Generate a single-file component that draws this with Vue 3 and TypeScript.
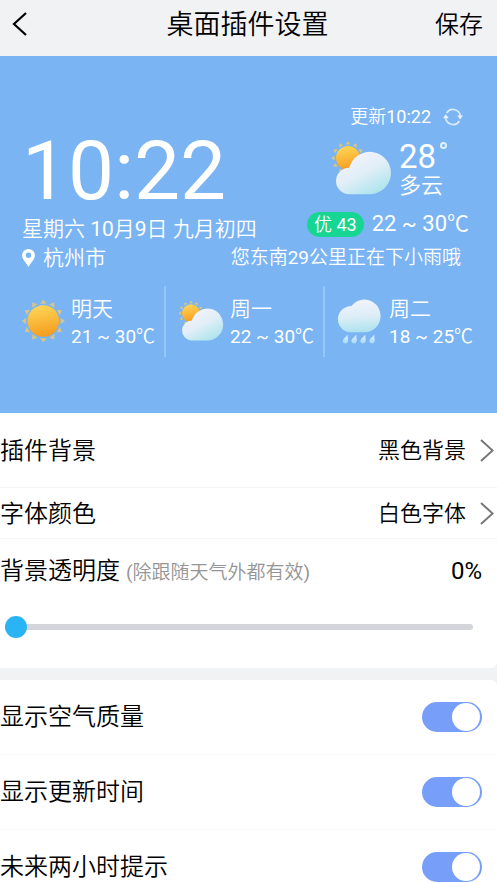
<script setup lang="ts">
import { ref } from 'vue'

type Sky = 'sunny' | 'cloudy' | 'rain'

interface Forecast {
  day: string
  range: string
  sky: Sky
}

interface Option {
  id: string
  label: string
  value: string
  choices: string[]
}

interface Toggle {
  id: string
  label: string
  on: boolean
}

const forecasts: Forecast[] = [
  { day: '明天', range: '21 ~ 30℃', sky: 'sunny' },
  { day: '周一', range: '22 ~ 30℃', sky: 'cloudy' },
  { day: '周二', range: '18 ~ 25℃', sky: 'rain' },
]

const options = ref<Option[]>([
  { id: 'background', label: '插件背景', value: '黑色背景', choices: ['黑色背景'] },
  { id: 'font-color', label: '字体颜色', value: '白色字体', choices: ['白色字体'] },
])

const toggles = ref<Toggle[]>([
  { id: 'air', label: '显示空气质量', on: true },
  { id: 'updated', label: '显示更新时间', on: true },
  { id: 'two-hours', label: '未来两小时提示', on: true },
])

const opacity = ref(0)

const rays = Array.from({ length: 12 }, (_, i) => i * 30)
const drops = [8, 16.6, 25.6, 34.6]
</script>

<template>
  <div class="page">
    <svg class="defs" width="0" height="0" aria-hidden="true">
      <defs>
        <linearGradient id="sun-fill" x1="0.4" y1="0" x2="0.6" y2="1">
          <stop offset="0" stop-color="#ffd656" />
          <stop offset="1" stop-color="#f59a1e" />
        </linearGradient>
        <linearGradient id="cloud-fill" gradientUnits="userSpaceOnUse" x1="22" y1="14" x2="44" y2="56">
          <stop offset="0" stop-color="#f1f3fc" />
          <stop offset="0.45" stop-color="#e2eef8" />
          <stop offset="1" stop-color="#a9e4ec" />
        </linearGradient>
        <linearGradient id="rain-fill" gradientUnits="userSpaceOnUse" x1="22" y1="1" x2="24" y2="34">
          <stop offset="0" stop-color="#f1f3fc" />
          <stop offset="0.5" stop-color="#dcedf7" />
          <stop offset="1" stop-color="#a9e2ee" />
        </linearGradient>
        <linearGradient id="drop-fill" x1="0" y1="0" x2="0" y2="1">
          <stop offset="0" stop-color="#e6f2fb" />
          <stop offset="1" stop-color="#a5d8f7" />
        </linearGradient>
        <symbol id="cloudy" viewBox="0 0 60 56">
          <g transform="translate(17 18)">
            <path
              v-for="angle in rays"
              :key="angle"
              d="M-2.3 -13.4 L0 -17 L2.3 -13.4 Z"
              fill="#dcc67c"
              :transform="`rotate(${angle})`"
            />
            <circle r="12" fill="url(#sun-fill)" />
          </g>
          <path
            d="M18.2 54.2 A13.2 13.2 0 0 1 18.2 27.8 A21.2 21.2 0 1 1 38 54.2 Z"
            fill="url(#cloud-fill)"
          />
        </symbol>
      </defs>
    </svg>

    <header class="bar">
      <button class="back" type="button" aria-label="返回">
        <svg width="16" height="26" viewBox="0 0 16 26" aria-hidden="true">
          <path d="M14 1 L2 12 L14 23" fill="none" stroke="#000" stroke-width="2.2" />
        </svg>
      </button>
      <h1 class="title">桌面插件设置</h1>
      <button class="save" type="button">保存</button>
    </header>

    <section class="widget">
      <div class="current">
        <div class="when">
          <div class="clock">10:22</div>
          <div class="date">星期六 10月9日 九月初四</div>
        </div>
        <div class="now">
          <div class="updated">
            <span>更新10:22</span>
            <svg width="20" height="20" viewBox="0 0 20 20" aria-hidden="true">
              <g fill="none" stroke="#d9eafb" stroke-width="1.7">
                <path d="M3.6 6 A7.5 7.5 0 0 1 17.4 9.6" />
                <path d="M16.4 14 A7.5 7.5 0 0 1 2.6 10.4" />
              </g>
              <path d="M14.2 8.6 L20 8.6 L17.2 12.6 Z M0 11.2 L5.8 11.2 L2.8 7.2 Z" fill="#e8f3fd" />
            </svg>
          </div>
          <div class="sky">
            <svg class="sky-icon" viewBox="0 0 60 56" aria-hidden="true"><use href="#cloudy" /></svg>
            <div class="reading">
              <div class="degrees">28<span class="ring"></span></div>
              <div class="condition">多云</div>
            </div>
          </div>
          <div class="air">
            <span class="pill">优 43</span>
            <span>22 ~ 30℃</span>
          </div>
        </div>
      </div>

      <div class="place">
        <span class="city">
          <svg width="13" height="18" viewBox="0 0 13 18" aria-hidden="true">
            <path
              d="M6.5 0 A6.4 6.4 0 0 1 12.9 6.4 C12.9 10.4 8.6 13.6 6.5 18 C4.4 13.6 0.1 10.4 0.1 6.4 A6.4 6.4 0 0 1 6.5 0 Z M6.5 3.6 A2.7 2.7 0 1 0 6.5 9 A2.7 2.7 0 1 0 6.5 3.6 Z"
              fill="#fff"
              fill-rule="evenodd"
            />
          </svg>
          杭州市
        </span>
        <span class="tip">您东南29公里正在下小雨哦</span>
      </div>

      <ul class="forecast">
        <li v-for="item in forecasts" :key="item.day" class="day">
          <svg v-if="item.sky === 'sunny'" class="day-icon" viewBox="0 0 45 45" aria-hidden="true">
            <g transform="translate(23.3 22)">
              <path
                v-for="angle in rays"
                :key="angle"
                d="M-3.2 -17.2 L0 -21.6 L3.2 -17.2 Z"
                fill="#d3c58c"
                :transform="`rotate(${angle})`"
              />
              <circle r="15.8" fill="url(#sun-fill)" />
            </g>
          </svg>
          <svg v-else-if="item.sky === 'cloudy'" class="day-icon" viewBox="1 0 60 60" aria-hidden="true">
            <use href="#cloudy" width="60" height="56" y="1" />
          </svg>
          <svg v-else class="day-icon" viewBox="0 0 45 45" aria-hidden="true">
            <g fill="url(#rain-fill)">
              <path d="M13 33.3 A13 13 0 0 1 13 7.3 A16.4 16.4 0 1 1 28 33.3 Z" />
              <circle cx="13" cy="20.3" r="13" opacity="0.6" />
            </g>
            <path
              v-for="x in drops"
              :key="x"
              :transform="`translate(${x} 35.4)`"
              d="M1.6 0 C1.4 3 2.6 5 2 7.2 C1.2 9.8 -3.2 9.8 -3.2 6.6 C-3.2 4 -0.2 3 1.6 0 Z"
              fill="url(#drop-fill)"
            />
          </svg>
          <div class="day-text">
            <div class="day-name">{{ item.day }}</div>
            <div class="day-range">{{ item.range }}</div>
          </div>
        </li>
      </ul>
    </section>

    <section class="group">
      <div v-for="option in options" :key="option.id" class="row option">
        <label :for="option.id">{{ option.label }}</label>
        <span class="picker">
          <select :id="option.id" v-model="option.value">
            <option v-for="choice in option.choices" :key="choice">{{ choice }}</option>
          </select>
          <svg width="14" height="24" viewBox="0 0 14 24" aria-hidden="true">
            <path d="M1 1 L12.6 11.5 L1 22" fill="none" stroke="#777" stroke-width="2" />
          </svg>
        </span>
      </div>

      <div class="opacity">
        <div class="opacity-head">
          <label for="opacity">背景透明度 <small class="hint">(除跟随天气外都有效)</small></label>
          <output for="opacity">{{ opacity }}%</output>
        </div>
        <input id="opacity" v-model.number="opacity" class="slider" type="range" min="0" max="100" />
      </div>
    </section>

    <section class="group switches">
      <div v-for="toggle in toggles" :key="toggle.id" class="row toggle">
        <label :for="toggle.id">{{ toggle.label }}</label>
        <input :id="toggle.id" v-model="toggle.on" class="switch" type="checkbox" role="switch" />
      </div>
    </section>
  </div>
</template>

<style>
body {
  background: #fff;
}
</style>

<style scoped>
.page {
  font-family: Roboto, 'Noto Sans CJK SC DemiLight', 'Noto Sans CJK SC', sans-serif;
  font-size: 24px;
  font-weight: 400;
  line-height: 30px;
  color: #000;
  background: #f1f2f4;
  overflow: hidden;
}

.defs {
  position: absolute;
}

button {
  padding: 0;
  border: 0;
  background: none;
  font: inherit;
  color: inherit;
}

.bar {
  display: grid;
  grid-template-columns: 1fr auto 1fr;
  align-items: center;
  padding: 1px 14px 7px 12px;
  height: 48px;
}

.back {
  display: flex;
  justify-self: start;
}

.title {
  margin: 0;
  font-size: 27px;
  font-weight: inherit;
}

.save {
  justify-self: end;
}

.widget {
  padding: 49px 0 56px;
  color: #fff;
  background: #7ab4f3;
}

.current {
  display: flex;
  justify-content: space-between;
  align-items: flex-end;
  padding: 0 28px 0 22px;
}

.clock {
  font-size: 82px;
  line-height: 84px;
}

.date {
  padding-top: 1px;
  font-size: 21px;
  white-space: nowrap;
}

.now {
  display: flex;
  flex-direction: column;
  align-items: flex-end;
  padding-bottom: 5px;
}

.updated {
  display: flex;
  align-items: center;
  gap: 12px;
  padding-right: 6px;
  font-size: 18px;
  line-height: 24px;
}

.sky {
  display: flex;
  align-items: center;
  gap: 8px;
  padding: 8px 22px 11px 0;
}

.sky-icon {
  width: 60px;
  height: 56px;
}

.reading {
  padding-top: 5px;
}

.degrees {
  display: flex;
  font-size: 33px;
  line-height: 30px;
}

.ring {
  box-sizing: border-box;
  width: 7px;
  height: 7px;
  margin-left: 4px;
  border: 2px solid #e4f0fd;
  border-radius: 50%;
}

.condition {
  font-size: 22px;
  line-height: 28px;
  margin-bottom: -2px;
}

.air {
  display: flex;
  align-items: center;
  gap: 8px;
  font-size: 22px;
}

.pill {
  padding: 0 7px;
  border-radius: 13px;
  background: #17d592;
  font-size: 18px;
  line-height: 25px;
}

.place {
  display: flex;
  justify-content: space-between;
  align-items: center;
  padding: 0 36px 0 22px;
  font-size: 21px;
  line-height: 28px;
}

.city {
  display: flex;
  align-items: center;
  gap: 8px;
}

.tip {
  font-size: 19px;
}

.forecast {
  display: grid;
  grid-template-columns: repeat(3, 1fr);
  margin: 14px 0 0;
  padding: 0 13px 0 7px;
  list-style: none;
}

.day {
  display: flex;
  align-items: center;
  gap: 6px;
  padding: 5px 0 6px 13px;
  border-right: 2px solid #97c6f8;
  line-height: 28px;
  white-space: nowrap;
}

.day:last-child {
  border-right: 0;
}

.day-icon {
  flex: none;
  width: 45px;
  height: 45px;
}

.day-text {
  padding-top: 4px;
}

.day-name {
  font-size: 21px;
}

.day-range {
  font-size: 19px;
}

.group {
  background: #fff;
  border-radius: 0 0 6px 0;
}

.row {
  display: flex;
  justify-content: space-between;
  align-items: center;
  border-bottom: 1px solid #f4f4f5;
}

.option {
  padding: 11px 3px 9px 0;
}

.option:first-child {
  padding: 23px 3px 21px 0;
}

.picker {
  display: flex;
  align-items: center;
  gap: 13px;
}

.picker select {
  appearance: none;
  padding: 0;
  border: 0;
  background: none;
  font: inherit;
  font-size: 22px;
  color: inherit;
}

.opacity {
  padding: 17px 0 30px;
}

.opacity-head {
  display: flex;
  justify-content: space-between;
  padding-right: 15px;
}

.hint {
  font-size: 19px;
  color: #959595;
}

.slider {
  appearance: none;
  display: block;
  width: calc(100% - 29px);
  height: 22px;
  margin: 28px 24px 0 5px;
  background: none;
}

.slider::-webkit-slider-runnable-track {
  height: 6px;
  border-radius: 3px;
  background: #d4d5da;
}

.slider::-webkit-slider-thumb {
  appearance: none;
  width: 22px;
  height: 22px;
  margin-top: -8px;
  border-radius: 50%;
  background: #2bb4f3;
}

.switches {
  margin-top: 12px;
  border-radius: 0 6px 0 0;
}

.toggle {
  padding: 22px 15px 22px 0;
  border-color: #f9f9f9;
}

.switch {
  appearance: none;
  box-sizing: border-box;
  display: flex;
  width: 60px;
  height: 30px;
  margin: 0;
  padding: 1px 2px;
  border-radius: 15px;
  background: #779ffa;
}

.switch::before {
  content: '';
  width: 28px;
  height: 28px;
  border-radius: 50%;
  background: #fff;
}

.switch:not(:checked) {
  background: #d4d5da;
}

.switch:checked {
  justify-content: flex-end;
}
</style>
